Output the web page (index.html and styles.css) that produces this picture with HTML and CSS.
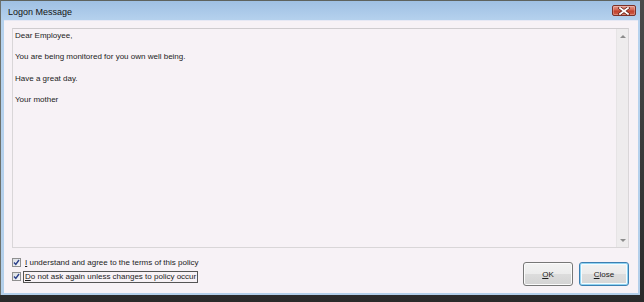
FILE: index.html
```html
<!DOCTYPE html>
<html>
<head>
<meta charset="utf-8">
<link rel="stylesheet" href="styles.css">
</head>
<body>
<div class="window">
  <div class="titlebar">
    <span class="title">Logon Message</span>
    <span class="close-x">
      <svg width="12" height="8" viewBox="0 0 12 8"><path d="M2 1 L10 7 M10 1 L2 7" stroke="#5a1a12" stroke-width="3.2" stroke-linecap="square"/><path d="M2 1 L10 7 M10 1 L2 7" stroke="#ffffff" stroke-width="1.8" stroke-linecap="square"/></svg>
    </span>
  </div>
  <div class="client">
    <div class="textbox">
      <div class="message">
        <p>Dear Employee,</p>
        <p>You are being monitored for you own well being.</p>
        <p>Have a great day.</p>
        <p>Your mother</p>
      </div>
      <div class="scrollbar">
        <span class="arrow up"></span>
        <span class="arrow down"></span>
      </div>
    </div>
    <div class="footer">
      <div class="checks">
        <label class="check"><span class="box"><svg width="7" height="7" viewBox="0 0 7 7"><path d="M1 3.5 L2.8 5.5 L6 1" fill="none" stroke="#2a3f8a" stroke-width="1.4"/></svg></span><span class="lbl"><u>I</u> understand and agree to the terms of this policy</span></label>
        <label class="check"><span class="box"><svg width="7" height="7" viewBox="0 0 7 7"><path d="M1 3.5 L2.8 5.5 L6 1" fill="none" stroke="#2a3f8a" stroke-width="1.4"/></svg></span><span class="lbl focus"><u>D</u>o not ask again unless changes to policy occur</span></label>
      </div>
      <div class="buttons">
        <button class="btn"><u>O</u>K</button>
        <button class="btn default"><u>C</u>lose</button>
      </div>
    </div>
  </div>
</div>
</body>
</html>
```
FILE: styles.css
```css
html, body {
  margin: 0;
  padding: 0;
}
body {
  width: 644px;
  height: 302px;
  overflow: hidden;
  background: linear-gradient(#4a4a4a, #2a2a2a);
  font-family: "Liberation Sans", Arial, sans-serif;
}
.window {
  width: 640px;
  height: 295px;
  box-sizing: border-box;
  border-top: 1px solid #5e635e;
  border-left: 1px solid #6d716d;
  background: linear-gradient(#9fc0e3, #b6d2ee 20px, #b3cfea);
  padding: 0 2px 2px 3px;
  display: flex;
  flex-direction: column;
}
.titlebar {
  height: 19px;
  display: flex;
  align-items: center;
  justify-content: space-between;
  padding-left: 4px;
  padding-right: 2px;
  box-sizing: border-box;
}
.title {
  font-size: 9px;
  color: #141414;
  margin-top: 2px;
}
.close-x {
  width: 24px;
  height: 11px;
  box-sizing: border-box;
  border: 1px solid #7b3128;
  border-radius: 2px;
  background: linear-gradient(#e49a8d, #d3624f 45%, #c0412c 55%, #d0604a);
  display: flex;
  align-items: center;
  justify-content: center;
  box-shadow: inset 0 0 0 1px rgba(255,255,255,0.25);
}
.close-x svg { display: block; }
.client {
  flex: 1;
  background: #f7f2f6;
  padding: 7px 9px 0 8px;
  display: flex;
  flex-direction: column;
  border-top: 1px solid #e6e8f4;
}
.textbox {
  height: 220px;
  box-sizing: border-box;
  border: 1px solid #d9d6d8;
  border-top-color: #cfcccf;
  display: flex;
  background: #f7f2f6;
}
.message {
  flex: 1;
  padding: 2px 0 0 2px;
  font-size: 8px;
  color: #1c1c1c;
}
.message p {
  margin: 0 0 12.4px 0;
  line-height: 9px;
}
.scrollbar {
  width: 12px;
  background: #eeeced;
  border-left: 1px solid #e6e4e5;
  display: flex;
  flex-direction: column;
  justify-content: space-between;
  align-items: center;
  padding: 6px 0 5px;
  box-sizing: border-box;
}
.arrow {
  width: 0;
  height: 0;
  border-left: 3px solid transparent;
  border-right: 3px solid transparent;
}
.arrow.up { border-bottom: 3px solid #8c8c8c; }
.arrow.down { border-top: 3px solid #8c8c8c; }
.footer {
  display: flex;
  justify-content: space-between;
  align-items: flex-start;
  padding-top: 10px;
}
.checks {
  display: flex;
  flex-direction: column;
  gap: 5px;
}
.check {
  display: flex;
  align-items: center;
  font-size: 8px;
  color: #1c1c1c;
  height: 9px;
}
.box {
  width: 9px;
  height: 9px;
  box-sizing: border-box;
  border: 1px solid #8f8f8f;
  background: linear-gradient(135deg, #dadde2, #f7f8fa);
  display: flex;
  align-items: center;
  justify-content: center;
  margin-right: 3px;
}
.box svg { display: block; }
.lbl {
  line-height: 10px;
  padding: 0 1px;
}
.lbl.focus {
  border: 1px solid #555;
  margin-left: -1px;
  padding: 0 1px;
}
.buttons {
  display: flex;
  gap: 6px;
  margin-top: 4px;
}
.btn {
  width: 50px;
  height: 24px;
  box-sizing: border-box;
  border: 1px solid #777;
  border-radius: 3px;
  background: linear-gradient(#f3f3f3, #ececec 48%, #dcdcdc 52%, #d3d3d3);
  box-shadow: inset 0 0 0 1px #fbfbfb;
  font-family: "Liberation Sans", Arial, sans-serif;
  font-size: 8px;
  color: #1c1c1c;
  padding: 0;
}
.btn.default {
  border-color: #3c7fb1;
  box-shadow: inset 0 0 0 1px #8fd3f2, inset 0 0 0 2px #f4fbfe;
  background: linear-gradient(#f2f2f2, #ebebeb 48%, #dddddd 52%, #d6d6d6);
}
```
